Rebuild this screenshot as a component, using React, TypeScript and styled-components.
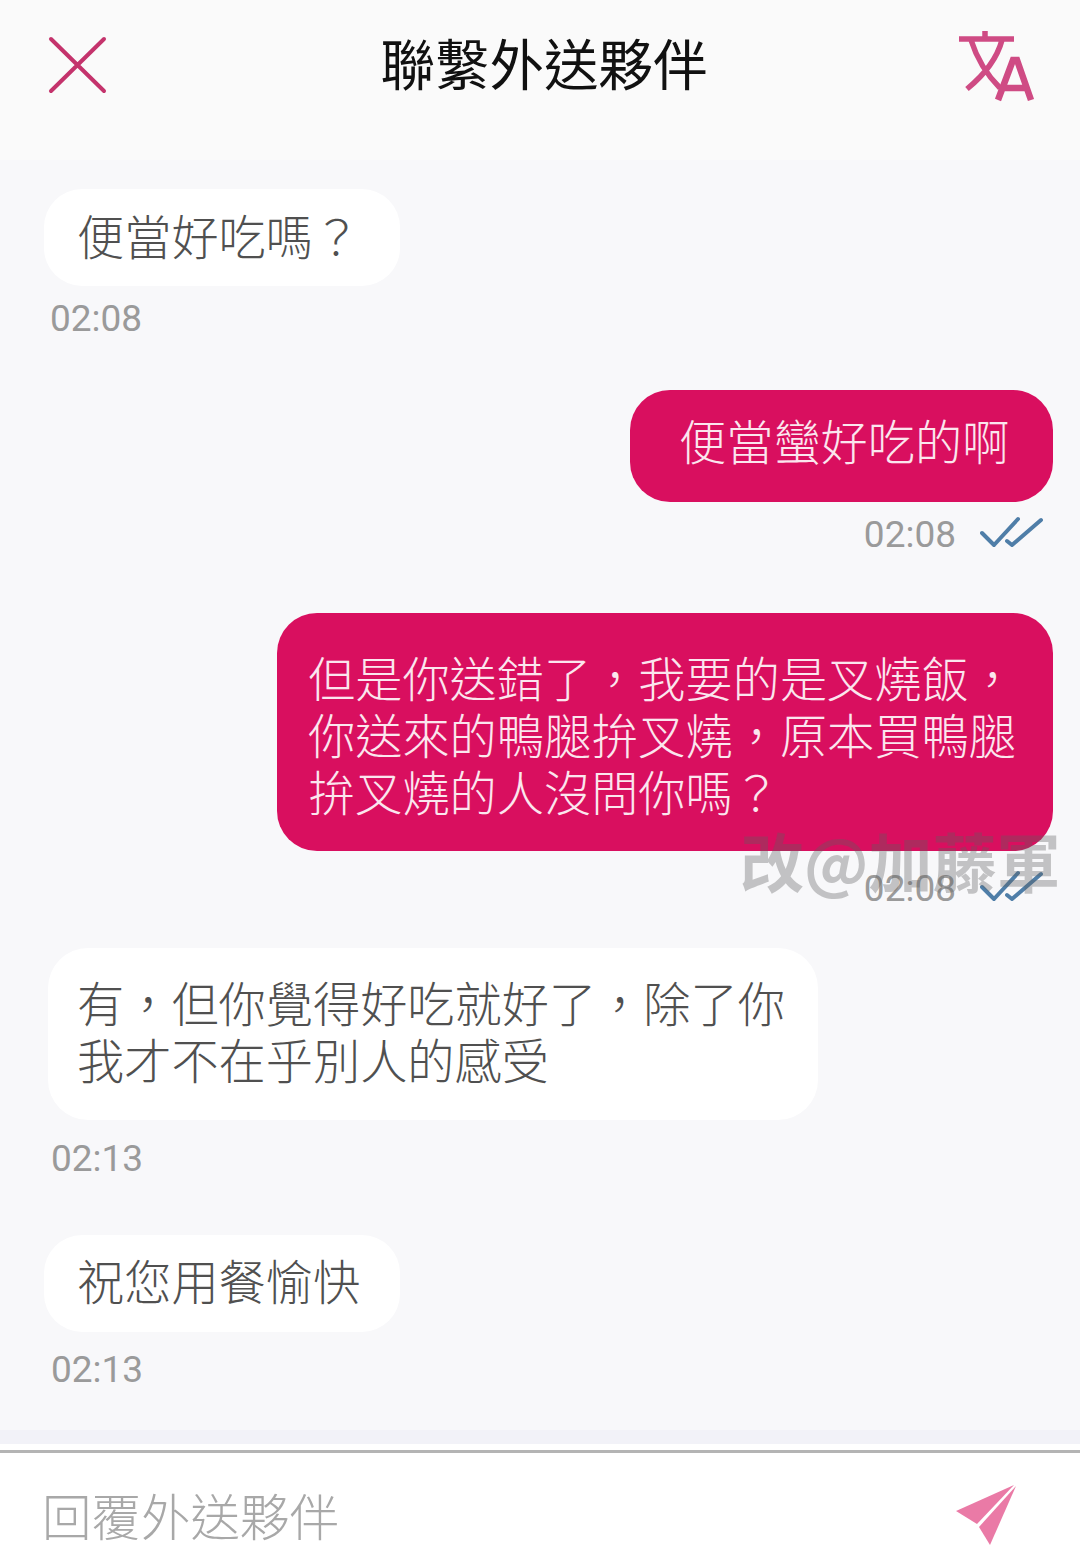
import React from "react";
import styled, { createGlobalStyle } from "styled-components";

const GlobalStyle = createGlobalStyle`
  html, body {
    margin: 0;
    padding: 0;
    background: #f8f8fa;
  }
`;

const CJK = `"Noto Sans CJK TC", "Noto Sans CJK SC", sans-serif`;

export default function App() {
  return (
    <>
      <GlobalStyle />
      <Page>
        <Header>
          <IconSlot>
            <CloseIcon />
          </IconSlot>
          <Title>聯繫外送夥伴</Title>
          <IconSlot>
            <TranslateIcon />
          </IconSlot>
        </Header>

        <Messages>
          <Message $top={29} $left={44}>
            <Bubble $w={356} $h={97} $radius={38} $textTop={17}>便當好吃嗎？</Bubble>
            <Meta $h={64} $left={6}><Time>02:08</Time></Meta>
          </Message>

          <Message $mine $top={40}>
            <Bubble $mine $w={423} $h={112} $radius={40} $pad={49} $textTop={21}>便當蠻好吃的啊</Bubble>
            <Meta $mine $h={64}>
              <Time>02:08</Time>
              <DoubleCheck />
            </Meta>
          </Message>

          <Message $mine $top={47}>
            <Bubble $mine $w={776} $h={238} $radius={40} $pad={31} $textTop={35}>
              但是你送錯了，我要的是叉燒飯，
              <br />
              你送來的鴨腿拚叉燒，原本買鴨腿
              <br />
              拚叉燒的人沒問你嗎？
            </Bubble>
            <Meta $mine $h={74}>
              <Time>02:08</Time>
              <DoubleCheck />
            </Meta>
          </Message>

          <Message $top={23} $left={48}>
            <Bubble $w={770} $h={172} $radius={40} $pad={29} $textTop={25}>
              有，但你覺得好吃就好了，除了你
              <br />
              我才不在乎別人的感受
            </Bubble>
            <Meta $h={76} $left={3}><Time>02:13</Time></Meta>
          </Message>

          <Message $top={39} $left={44}>
            <Bubble $w={356} $h={97} $radius={38} $textTop={16}>祝您用餐愉快</Bubble>
            <Meta $h={74} $left={7}><Time>02:13</Time></Meta>
          </Message>
        </Messages>

        <Composer>
          <Placeholder>回覆外送夥伴</Placeholder>
          <SendIcon />
        </Composer>

        <Watermark>改@加藤軍</Watermark>
      </Page>
    </>
  );
}

const CloseIcon = () => (
  <svg width="60" height="62" viewBox="0 0 60 62" fill="none">
    <path d="M3 5 L56 57 M56 5 L3 57" stroke="#c4336c" strokeWidth="4" strokeLinecap="round" />
  </svg>
);

const TranslateIcon = () => (
  <svg width="80" height="76" viewBox="0 0 80 76" fill="none">
    <path
      d="M3 10 H58 M29 2 V10 M15 11 C21 30 31 46 44 59 M46 11 C41 30 28 46 11 60"
      stroke="#cf4b84"
      strokeWidth="5.5"
    />
    <path d="M42 71 L57 31 H61 L75 71 M46 59 H71" stroke="#cf4b84" strokeWidth="6.5" />
  </svg>
);

const DoubleCheck = () => (
  <CheckSvg width="64" height="34" viewBox="0 0 64 34" fill="none">
    <path
      d="M2 17 L14 29 L38 3 M27 25 L32 29 L61 4"
      stroke="#4f7ea8"
      strokeWidth="4"
      strokeLinecap="round"
      strokeLinejoin="round"
    />
  </CheckSvg>
);

const SendIcon = () => (
  <SendSvg width="64" height="64" viewBox="0 0 64 64">
    <path d="M2 28 L60 2 L23 41 Z" fill="#ea7aa6" />
    <path d="M62 3 L25 44 L36 62 Z" fill="#ea7aa6" />
  </SendSvg>
);

const Page = styled.div`
  position: relative;
  width: 1080px;
  height: 1559px;
  overflow: hidden;
  display: flex;
  flex-direction: column;
  background: #f8f8fa;
  font-family: ${CJK};
`;

const Header = styled.header`
  height: 160px;
  box-sizing: border-box;
  padding: 0 44px 30px 48px;
  display: flex;
  align-items: center;
  justify-content: space-between;
  background: #fafafa;
`;

const IconSlot = styled.div`
  width: 80px;
  display: flex;
  &:last-child {
    justify-content: flex-end;
    padding-top: 4px;
  }
`;

const Title = styled.h1`
  margin: 0 0 6px 4px;
  font-size: 54.5px;
  font-weight: 400;
  color: #111;
  line-height: 1.2;
`;

const Messages = styled.main`
  flex: 1;
  display: flex;
  flex-direction: column;
`;

const Message = styled.div<{ $mine?: boolean; $top: number; $left?: number }>`
  display: flex;
  flex-direction: column;
  align-items: ${(p) => (p.$mine ? "flex-end" : "flex-start")};
  margin-top: ${(p) => p.$top}px;
  padding-left: ${(p) => p.$left ?? 0}px;
  padding-right: ${(p) => (p.$mine ? 27 : 0)}px;
`;

const Bubble = styled.div<{
  $mine?: boolean;
  $w: number;
  $h: number;
  $radius: number;
  $pad?: number;
  $textTop: number;
}>`
  box-sizing: border-box;
  width: ${(p) => p.$w}px;
  height: ${(p) => p.$h}px;
  padding-left: ${(p) => p.$pad ?? 33}px;
  padding-top: ${(p) => p.$textTop}px;
  border-radius: ${(p) => p.$radius}px;
  background: ${(p) => (p.$mine ? "#d90f5f" : "#ffffff")};
  color: ${(p) => (p.$mine ? "#fbe6ee" : "#505050")};
  font-size: 47.2px;
  font-weight: 300;
  line-height: 57px;
  white-space: nowrap;
`;

const Meta = styled.div<{ $mine?: boolean; $left?: number; $h: number }>`
  height: ${(p) => p.$h}px;
  display: flex;
  align-items: center;
  gap: 24px;
  padding-left: ${(p) => p.$left ?? 0}px;
  padding-right: ${(p) => (p.$mine ? 9 : 0)}px;
`;

const Time = styled.span`
  font-family: Roboto, "Liberation Sans", sans-serif;
  font-size: 37px;
  color: #9a9a9a;
`;

const CheckSvg = styled.svg`
  flex: none;
  margin-bottom: 3px;
`;

const Composer = styled.footer`
  height: 109px;
  box-sizing: border-box;
  padding: 16px 62px 0 42px;
  display: flex;
  align-items: center;
  justify-content: space-between;
  background: #fff;
  border-top: 3px solid #b4b4b4;
  box-shadow: 0 -6px 0 #fff, 0 -20px 0 #f2f2f8;
`;

const Placeholder = styled.span`
  font-size: 49.5px;
  font-weight: 300;
  color: #a8a8a8;
`;

const SendSvg = styled.svg`
  flex: none;
  margin-top: 2px;
`;

const Watermark = styled.div`
  position: absolute;
  left: 740px;
  top: 814px;
  font-size: 64px;
  font-weight: 700;
  line-height: 90px;
  white-space: nowrap;
  color: rgba(95, 95, 95, 0.35);
`;
